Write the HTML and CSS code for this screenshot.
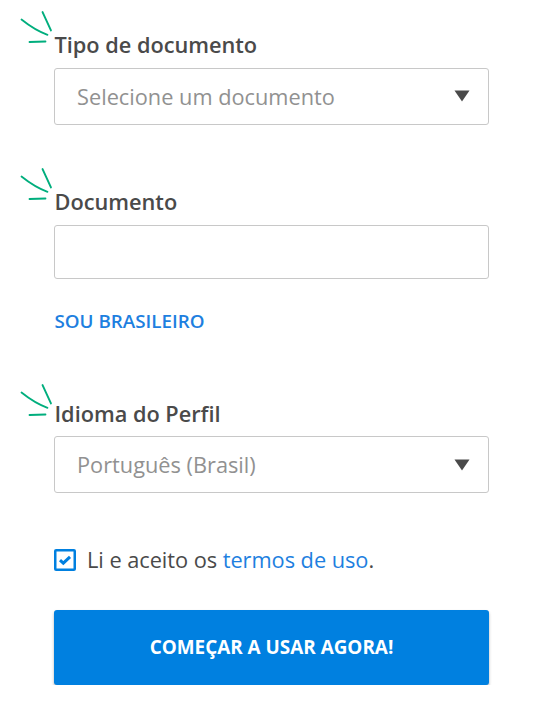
FILE: index.html
```
<!DOCTYPE html>
<html lang="pt-BR">
<head>
    <meta charset="UTF-8">
    <title>Cadastro</title>
    <link rel="stylesheet" href="styles.css">
</head>
<body>
    <form class="form">
        <div class="form-group">
            <svg class="mark" width="34" height="36" viewBox="0 0 34 36">
                <path d="M2.5 9.5C10 15.5 18 21 28.5 24.8M23.5 2L32 20.5M10.5 32L26.5 31.5"/>
            </svg>
            <label for="docType">Tipo de documento</label>
            <div class="select-box">
                <select id="docType">
                    <option>Selecione um documento</option>
                </select>
                <svg class="arrow" width="16" height="12" viewBox="0 0 16 12"><path d="M0.5 0.5H15.5L8 11.5Z"/></svg>
            </div>
        </div>
        <div class="form-group">
            <svg class="mark" width="34" height="36" viewBox="0 0 34 36">
                <path d="M2.5 9.5C10 15.5 18 21 28.5 24.8M23.5 2L32 20.5M10.5 32L26.5 31.5"/>
            </svg>
            <label for="document">Documento</label>
            <input type="text" id="document">
            <a class="link-button" href="#">SOU BRASILEIRO</a>
        </div>
        <div class="form-group">
            <svg class="mark mark-language" width="34" height="36" viewBox="0 0 34 36">
                <path d="M2.5 9.5C10 15.5 18 21 28.5 24.8M23.5 2L32 20.5M10.5 32L26.5 31.5"/>
            </svg>
            <label class="label-language" for="language">Idioma do Perfil</label>
            <div class="select-box">
                <select id="language">
                    <option>Português (Brasil)</option>
                </select>
                <svg class="arrow arrow-language" width="16" height="12" viewBox="0 0 16 12"><path d="M0.5 0.5H15.5L8 11.5Z"/></svg>
            </div>
        </div>
        <div class="terms">
            <svg class="checkbox" width="22" height="22" viewBox="0 0 22 22">
                <rect x="1.25" y="1.25" width="19.5" height="19.5" rx="0.8"/>
                <path class="check" d="M6 11.2L9.3 14.2L16 7.8"/>
            </svg>
            <span>Li e aceito os <a href="#">termos de uso</a>.</span>
        </div>
        <button type="button" class="button">COMEÇAR A USAR AGORA!</button>
    </form>
</body>
</html>
```
FILE: styles.css
```
* {
    box-sizing: border-box;
}

body {
    margin: 0;
    background-color: #FFFFFF;
    color: #4A4A4A;
    font-family: "Open Sans", sans-serif;
    font-size: 21.75px;
}

.form {
    width: 435px;
    margin-left: 54px;
    padding-top: 29px;
}

.form-group {
    position: relative;
    margin-bottom: 61px;
}

/* green strokes beside each label */
.mark {
    position: absolute;
    left: -35px;
    top: -19px;
    fill: none;
    stroke: #00AE7D;
    stroke-width: 1.8;
    stroke-linecap: round;
}

.mark-language {
    top: -14px;
}

label {
    display: block;
    height: 30px;
    margin-bottom: 9px;
    padding-left: 0.5px;
    line-height: 32px;
    font-weight: 600;
    letter-spacing: -0.02px;
}

.label-language {
    line-height: 34px;
}

.select-box {
    position: relative;
}

select,
input[type="text"] {
    display: block;
    width: 100%;
    height: 57px;
    padding: 0 22px;
    background-color: #FFFFFF;
    border: 1px solid #C8C8C8;
    border-radius: 3px;
    color: #919191;
    font-family: inherit;
    font-size: 21.75px;
    appearance: none;
}

input[type="text"] {
    height: 54px;
}

.arrow {
    position: absolute;
    right: 19px;
    top: 22px;
    fill: #4A4A4A;
    pointer-events: none;
}

.arrow-language {
    top: 23px;
}

a {
    color: #1E7FE0;
    text-decoration: none;
}

.link-button {
    display: block;
    margin-top: 27px;
    padding-left: 0.5px;
    font-size: 18.8px;
    line-height: 30px;
    font-weight: 600;
}

.terms {
    display: flex;
    align-items: center;
    gap: 11px;
    height: 30px;
    margin-top: -9px;
    font-size: 21.8px;
    letter-spacing: -0.05px;
}

.terms span {
    padding-bottom: 2px;
}

.checkbox {
    fill: none;
    stroke: #0080E0;
    stroke-width: 2.5;
}

.check {
    stroke-width: 3;
}

.button {
    display: block;
    width: 100%;
    height: 75px;
    margin-top: 35px;
    padding-bottom: 3px;
    background-color: #0080E0;
    color: #FFFFFF;
    font-family: inherit;
    font-size: 18.9px;
    font-weight: 700;
    border: none;
    border-radius: 3px;
    box-shadow: 0 2px 3px rgba(0, 0, 0, 0.3);
    cursor: pointer;
}
```
